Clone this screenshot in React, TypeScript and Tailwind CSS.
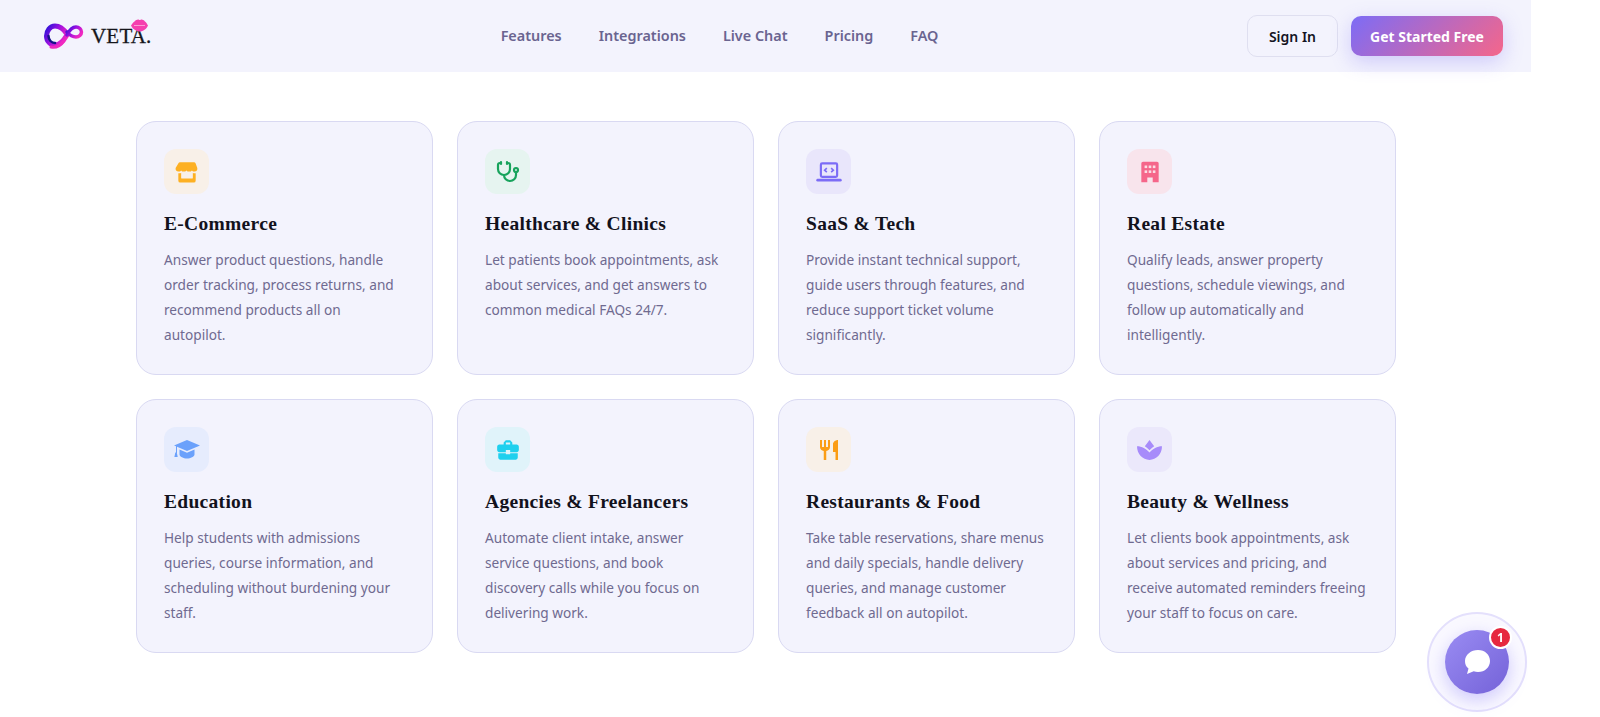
import React from 'react';
import { Stethoscope } from 'lucide-react';
import { MdBusinessCenter, MdRestaurant } from 'react-icons/md';

const StoreIcon = () => (
  <svg width="26" height="26" viewBox="0 0 24 24" fill="#fdb022">
    <path d="M5.500 3h13a1.500 1.500 0 0 1 1.400 1l1.600 4.200a3 3 0 0 1-2.500 3.400c-1 0-1.900-.4-2.400-1.100a3.300 3.300 0 0 1-2.600 1.100c-1 0-1.900-.4-2.500-1.100a3.300 3.300 0 0 1-2.500 1.100c-1 0-1.900-.4-2.400-1.100-.5.7-1.400 1.100-2.400 1.100a3 3 0 0 1-2.700-3.400L4.100 4a1.500 1.500 0 0 1 1.400-1z" />
    <path d="M4 13.200c.7.100 1.700.1 2.600-.2v4.200a.8.8 0 0 0 .8.800h9.200a.8.800 0 0 0 .8-.800V13c.9.300 1.900.3 2.600.2V20a1.800 1.800 0 0 1-1.800 1.800H5.800A1.800 1.800 0 0 1 4 20z" />
  </svg>
);

const LaptopCodeIcon = () => (
  <svg width="26" height="26" viewBox="0 0 24 24" fill="none" stroke="#7c6cf6">
    <rect x="4.500" y="4" width="15" height="12.500" rx="1.200" strokeWidth="2" />
    <path d="M1.500 19.500h21" strokeWidth="2.400" strokeLinecap="round" />
    <path d="M10 8.500l-2 1.800 2 1.800M14 8.500l2 1.800-2 1.800" strokeWidth="1.500" />
  </svg>
);

const BuildingIcon = () => (
  <svg width="26" height="26" viewBox="0 0 24 24">
    <path fill="#f5668a" d="M5.500 2.500h13a1.500 1.500 0 0 1 1.500 1.500v17.500h-5.500V17h-5v4.500H4V4a1.500 1.500 0 0 1 1.500-1.500z" />
    <g fill="#fbdde5">
      <rect x="7" y="6" width="2.400" height="2.400" />
      <rect x="10.800" y="6" width="2.400" height="2.400" />
      <rect x="14.600" y="6" width="2.400" height="2.400" />
      <rect x="7" y="10.500" width="2.400" height="2.400" />
      <rect x="10.800" y="10.500" width="2.400" height="2.400" />
      <rect x="14.600" y="10.500" width="2.400" height="2.400" />
    </g>
  </svg>
);

const CapIcon = () => (
  <svg width="26" height="19" viewBox="0 0 26 19" fill="#6ba1fb">
    <path d="M13 0l13 5.500L13 11 3 6.800V13H2V6.300L0 5.500z" />
    <path d="M5.500 9.500L13 12.700l7.500-3.200v5c0 2.300-4 4-7.500 4s-7.500-1.700-7.500-4z" />
    <path d="M1.300 12.500h1.500l.9 4.500H.4z" />
  </svg>
);

const LotusIcon = () => (
  <svg width="25" height="20" viewBox="0 0 24 19" fill="#a78bfa">
    <path d="M12 0l4.500 6C15 7 13.500 8.200 12 9.800 10.500 8.200 9 7 7.500 6z" />
    <path d="M0 6c4.500 0 9 2.500 12 6 3-3.500 7.500-6 12-6 0 7.500-5.500 13-12 13S0 13.500 0 6z" />
  </svg>
);

const Logo = () => (
  <div className="relative flex w-[149px] items-center">
    <svg width="42" height="30" viewBox="0 0 42 30" fill="none">
      <defs>
        <linearGradient id="inf" x1="0" y1="0" x2="1" y2="0.600">
          <stop offset="0" stopColor="#2a10d8" />
          <stop offset="0.500" stopColor="#a010e0" />
          <stop offset="1" stopColor="#f028c0" />
        </linearGradient>
      </defs>
      <path d="M24 13C20 7 16 5 12 5 7 5 3.500 10 3.500 15c0 5.500 4 9 8.500 9 5 0 9-5 12-10" stroke="url(#inf)" strokeWidth="5" strokeLinecap="round" />
      <path d="M24 14c2-4 5-8 9-8 3 0 5.500 2.500 5.500 5S36 16 33 16c-3 0-6.500-2-9-5" stroke="url(#inf)" strokeWidth="3.500" strokeLinecap="round" />
      <path d="M5.500 15c0 4 3 7 6.500 7" stroke="#16108a" strokeWidth="2.500" strokeLinecap="round" />
      <path d="M8 26c5 1 10-2 13-6" stroke="#f028c0" strokeWidth="3" strokeLinecap="round" />
    </svg>
    <span className="ml-[6px] font-['Liberation_Serif',serif] text-[21px] leading-none tracking-[0.2px] text-[#16161c] [-webkit-text-stroke:0.3px_#16161c]">VETA.</span>
    <svg className="absolute left-[87px] top-[-2px]" width="19" height="13" viewBox="0 0 19 13">
      <path fill="#f53fae" d="M1 6.500C3 3.500 6 .5 8 .5c.8 0 1.200.6 1.800.6.600 0 1-.6 1.800-.6 2 0 5 3 6.400 6-1.500 3.500-5 6-8.200 6-3.300 0-7.200-2.500-8.800-6z" />
      <path stroke="#ffb0dc" strokeWidth="0.800" d="M4 6.500h11" />
    </svg>
  </div>
);

const industries = [
  { title: 'E-Commerce', text: 'Answer product questions, handle order tracking, process returns, and recommend products all on autopilot.', bg: 'bg-[#f8f0e8]', icon: <StoreIcon /> },
  { title: 'Healthcare & Clinics', text: 'Let patients book appointments, ask about services, and get answers to common medical FAQs 24/7.', bg: 'bg-[#e6f4f0]', icon: <Stethoscope size={24} color="#18a35c" strokeWidth={2.2} /> },
  { title: 'SaaS & Tech', text: 'Provide instant technical support, guide users through features, and reduce support ticket volume significantly.', bg: 'bg-[#e9e6fb]', icon: <LaptopCodeIcon /> },
  { title: 'Real Estate', text: 'Qualify leads, answer property questions, schedule viewings, and follow up automatically and intelligently.', bg: 'bg-[#f8e4ec]', icon: <BuildingIcon /> },
  { title: 'Education', text: 'Help students with admissions queries, course information, and scheduling without burdening your staff.', bg: 'bg-[#e6ecfd]', icon: <CapIcon /> },
  { title: 'Agencies & Freelancers', text: 'Automate client intake, answer service questions, and book discovery calls while you focus on delivering work.', bg: 'bg-[#e0f3fa]', icon: <MdBusinessCenter size={26} color="#1fd0ee" /> },
  { title: 'Restaurants & Food', text: 'Take table reservations, share menus and daily specials, handle delivery queries, and manage customer feedback all on autopilot.', bg: 'bg-[#f8f0e8]', icon: <MdRestaurant size={24} color="#fb9d16" /> },
  { title: 'Beauty & Wellness', text: 'Let clients book appointments, ask about services and pricing, and receive automated reminders freeing your staff to focus on care.', bg: 'bg-[#ebe8fb]', icon: <LotusIcon /> },
];

export default function App() {
  return (
    <div className="min-h-screen bg-white font-['Noto_Sans',sans-serif]">
      <div className="w-[1531px]">
        <nav className="flex h-[72px] items-center justify-between bg-[#f3f3fd] pl-[43px] pr-[28px]">
          <Logo />
          <div className="flex gap-[37px] text-[14.4px] font-semibold text-[#6a6490]">
            <span>Features</span>
            <span>Integrations</span>
            <span>Live Chat</span>
            <span>Pricing</span>
            <span>FAQ</span>
          </div>
          <div className="flex items-center gap-[13px]">
            <button className="h-[42px] w-[91px] rounded-[10px] border border-[#dfdff0] text-[14px] font-semibold text-[#14141f]">Sign In</button>
            <button className="h-[40px] w-[152px] rounded-[10px] bg-[linear-gradient(135deg,#7c6cf6,#f5668a)] text-[14px] font-bold text-white shadow-[0_6px_20px_rgba(124,108,246,0.3)]">Get Started Free</button>
          </div>
        </nav>

        <main className="ml-[136px] mt-[49px] grid w-[1260px] grid-cols-4 gap-[24px]">
          {industries.map((item) => (
            <div key={item.title} className="h-[254px] rounded-[20px] border border-[#d9d9f2] bg-[#f3f3fd] px-[27px] pt-[27px]">
              <div className={`flex h-[45px] w-[45px] items-center justify-center rounded-[12px] ${item.bg}`}>{item.icon}</div>
              <h3 className="mt-[16px] font-['Liberation_Serif',serif] text-[19.5px] leading-[28px] font-bold tracking-[0.3px] text-[#12121c]">{item.title}</h3>
              <p className="mt-[9px] text-[13.65px] leading-[25px] text-[#6f6a90]">{item.text}</p>
            </div>
          ))}
        </main>
      </div>

      {/* chat launcher */}
      <div className="fixed left-[1427px] top-[612px] flex h-[100px] w-[100px] items-center justify-center rounded-full border-2 border-[#e4e0fc] bg-[#faf9ff]">
        <div className="relative flex h-[64px] w-[64px] items-center justify-center rounded-full bg-[linear-gradient(135deg,#9a8cf3,#7462d8)] shadow-[0_6px_18px_rgba(124,108,246,0.35)]">
          <svg width="30" height="30" viewBox="0 0 30 30" fill="white">
            <path d="M16 3c7 0 12 4.800 12 11s-5 11-12 11c-1.500 0-3-.2-4.300-.7L5 27l1.500-5.500C4 19.500 3 17 3 14 3 7.800 9 3 16 3z" />
          </svg>
          <span className="absolute right-[-3px] top-[-4px] flex h-[23px] w-[23px] items-center justify-center rounded-full border-2 border-white bg-[#e6283f] text-[12px] font-bold text-white">1</span>
        </div>
      </div>
    </div>
  );
}
